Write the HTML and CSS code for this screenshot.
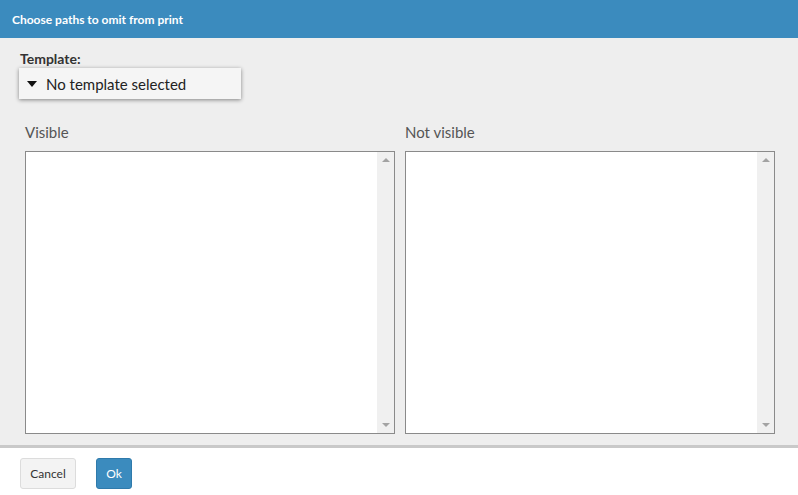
FILE: index.html
```html
<!DOCTYPE html>
<html lang="en">
<head>
  <meta charset="UTF-8">
  <title>Choose paths to omit from print</title>
  <link rel="stylesheet" href="styles.css">
</head>
<body>
  <div class="dialog">
    <header class="dialog-header">Choose paths to omit from print</header>

    <div class="dialog-body">
      <div class="template-label">Template:</div>
      <div class="template-select">
        <span class="caret"></span>
        <span>No template selected</span>
      </div>

      <div class="lists">
        <div class="list-col">
          <div class="list-title">Visible</div>
          <div class="listbox">
            <div class="list-items"></div>
            <div class="scrollbar">
              <span class="arrow up"></span>
              <span class="arrow down"></span>
            </div>
          </div>
        </div>
        <div class="list-col">
          <div class="list-title">Not visible</div>
          <div class="listbox">
            <div class="list-items"></div>
            <div class="scrollbar">
              <span class="arrow up"></span>
              <span class="arrow down"></span>
            </div>
          </div>
        </div>
      </div>
    </div>

    <!-- Footer buttons -->
    <footer class="dialog-footer">
      <button class="btn btn-cancel">Cancel</button>
      <button class="btn btn-ok">Ok</button>
    </footer>
  </div>
</body>
</html>
```

FILE: styles.css
```css
* { margin: 0; padding: 0; box-sizing: border-box; }
body {
  font-family: Lato, 'Open Sans', sans-serif;
  background: #fff;
  color: #333;
  width: 798px;
  height: 495px;
  overflow: hidden;
}

.dialog {
  height: 495px;
}

/* Header */
.dialog-header {
  height: 38px;
  background-color: #3b8bbe;
  color: #fff;
  font-size: 12px;
  font-weight: bold;
  padding: 0 12px;
  display: flex;
  align-items: center;
}

/* Body */
.dialog-body {
  background-color: #eeeeee;
  height: 410px;
  padding: 12px 20px 0 20px;
  border-bottom: 3px solid #c9c9c9;
}
.template-label {
  font-size: 14px;
  font-weight: bold;
  color: #333;
  line-height: 17px;
}
.template-select {
  margin-top: 1px;
  width: 222px;
  height: 31px;
  margin-left: -1px;
  background-color: #f5f5f5;
  box-shadow: 0 1px 4px rgba(0, 0, 0, 0.45);
  display: flex;
  align-items: center;
  padding-left: 8px;
  font-size: 15px;
  color: #222;
}
.caret {
  width: 0;
  height: 0;
  border-left: 5px solid transparent;
  border-right: 5px solid transparent;
  border-top: 6px solid #111;
  margin-right: 9px;
  margin-top: 1px;
}

/* Lists */
.lists {
  display: flex;
  gap: 10px;
  margin-top: 23px;
  padding-left: 5px;
}
.list-col { width: 370px; }
.list-title {
  font-size: 15px;
  color: #555;
  line-height: 20px;
  margin-bottom: 9px;
}
.listbox {
  height: 283px;
  border: 1px solid #8a8a8a;
  background: #fff;
  display: flex;
}
.list-items { flex: 1; }
.scrollbar {
  width: 17px;
  background: #f0f0f0;
  display: flex;
  flex-direction: column;
  justify-content: space-between;
  align-items: center;
  padding: 6px 0;
}
.arrow {
  width: 0;
  height: 0;
  border-left: 4px solid transparent;
  border-right: 4px solid transparent;
}
.arrow.up { border-bottom: 4px solid #a3a3a3; }
.arrow.down { border-top: 4px solid #a3a3a3; }

/* Footer */
.dialog-footer {
  background: #fff;
  display: flex;
  gap: 20px;
  padding: 10px 20px;
}
.btn {
  font-family: inherit;
  font-size: 12px;
  height: 31px;
  border-radius: 3px;
  cursor: pointer;
}
.btn-cancel {
  width: 56px;
  background: #f3f3f3;
  border: 1px solid #dcdcdc;
  color: #333;
}
.btn-ok {
  width: 36px;
  background: #3b8bbe;
  border: 1px solid #2f7aab;
  color: #fff;
}
```
